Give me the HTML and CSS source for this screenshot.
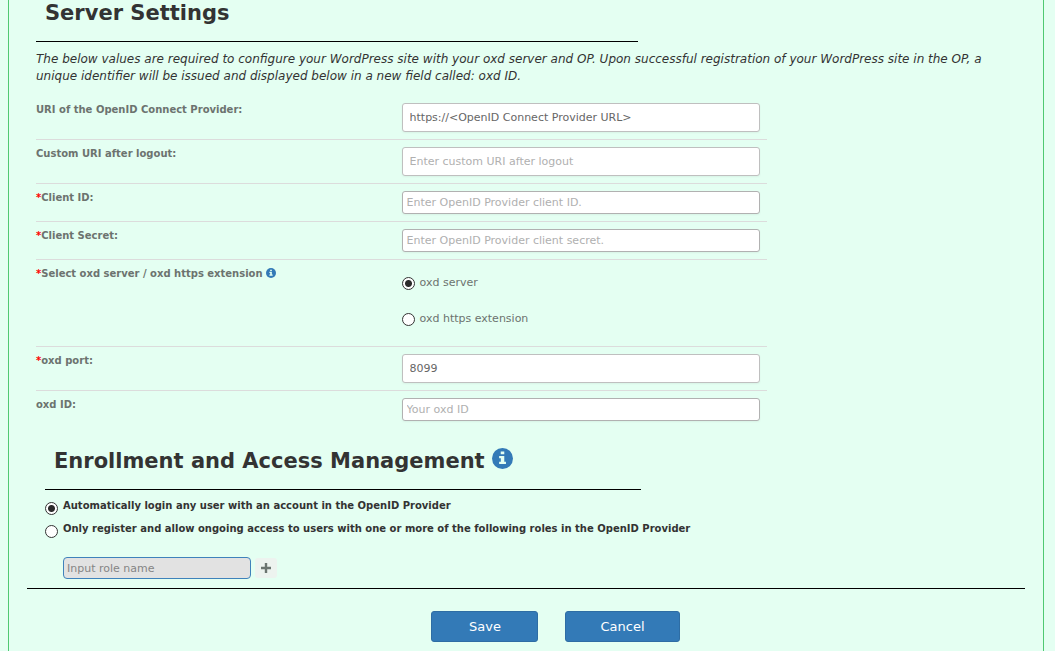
FILE: index.html
```html
<!DOCTYPE html>
<html lang="en">
<head>
<meta charset="utf-8">
<title>Server Settings</title>
<meta name="viewport" content="width=device-width, initial-scale=1">
<link rel="stylesheet" href="styles.css">
</head>
<body>
<svg class="sprite" aria-hidden="true">
  <symbol id="info" viewBox="0 0 20 20">
    <circle cx="10" cy="10" r="10" fill="#337ab7"/>
    <path fill="#e4fff2" d="M8.300 3.300h3.400v2.600H8.300zM6.800 7.500h4.900v5.500H13.300v2.300H6.800v-2.300h1.600v-3.200H6.800z"/>
  </symbol>
</svg>
<form class="panel">
  <section class="server">
    <h1 class="title">Server Settings</h1>
    <hr class="rule">
    <p class="intro">The below values are required to configure your WordPress site with your oxd server and OP. Upon successful registration of your WordPress site in the OP, a unique identifier will be issued and displayed below in a new field called: oxd ID.</p>
    <div class="fields">
      <div class="row">
        <label class="label" for="uri">URI of the OpenID Connect Provider:</label>
        <input class="field field-tall" id="uri" type="text" value="https://&lt;OpenID Connect Provider URL&gt;">
      </div>
      <div class="row">
        <label class="label" for="logout">Custom URI after logout:</label>
        <input class="field field-tall" id="logout" type="text" placeholder="Enter custom URI after logout">
      </div>
      <div class="row">
        <label class="label" for="client-id"><span class="required">*</span>Client ID:</label>
        <input class="field" id="client-id" type="text" placeholder="Enter OpenID Provider client ID.">
      </div>
      <div class="row">
        <label class="label" for="client-secret"><span class="required">*</span>Client Secret:</label>
        <input class="field" id="client-secret" type="text" placeholder="Enter OpenID Provider client secret.">
      </div>
      <div class="row" role="radiogroup" aria-labelledby="connection">
        <div class="label" id="connection"><span class="required">*</span>Select oxd server / oxd https extension <svg class="info-small" aria-hidden="true"><use href="#info"/></svg></div>
        <div class="choices">
          <label class="choice"><input class="radio" type="radio" name="connection" checked>oxd server</label>
          <label class="choice"><input class="radio" type="radio" name="connection">oxd https extension</label>
        </div>
      </div>
      <div class="row">
        <label class="label" for="port"><span class="required">*</span>oxd port:</label>
        <input class="field field-tall" id="port" type="text" value="8099">
      </div>
      <div class="row">
        <label class="label" for="oxd-id">oxd ID:</label>
        <input class="field" id="oxd-id" type="text" placeholder="Your oxd ID">
      </div>
    </div>
  </section>
  <section class="enrollment">
    <h2 class="title">Enrollment and Access Management <svg class="info-large" aria-hidden="true"><use href="#info"/></svg></h2>
    <hr class="rule">
    <div class="policies">
      <label class="policy"><input class="radio" type="radio" name="policy" checked><span>Automatically login any user with an account in the OpenID Provider</span></label>
      <label class="policy"><input class="radio" type="radio" name="policy"><span>Only register and allow ongoing access to users with one or more of the following roles in the OpenID Provider</span></label>
    </div>
    <div class="role">
      <input class="role-name" type="text" placeholder="Input role name" aria-label="Role name" disabled>
      <button class="add" type="button" aria-label="Add role"><svg class="plus" viewBox="0 0 12 12" aria-hidden="true"><path fill="#6b7570" d="M4.800 1h2.400v3.800H11v2.400H7.200V11H4.800V7.200H1V4.800h3.800z"/></svg></button>
    </div>
  </section>
  <hr class="divider">
  <div class="actions">
    <button class="button" type="submit">Save</button>
    <button class="button" type="button">Cancel</button>
  </div>
</form>
</body>
</html>
```
FILE: styles.css
```css
* {
  box-sizing: border-box;
}

body {
  margin: 0;
  background: #e4fff2;
  color: #333;
  font: 11px/16px Verdana, "DejaVu Sans", sans-serif;
}

input,
button {
  font: inherit;
}

.sprite {
  display: none;
}

.panel {
  min-height: 100vh;
  margin: 0 11px 0 8px;
  padding: 0 18px 9px;
  border: solid #4fc972;
  border-width: 0 1px;
}

.server {
  padding: 0 9px;
}

.title {
  margin: 0;
  padding-left: 9px;
  font-size: 21px;
  line-height: 26px;
}

.rule,
.divider {
  margin: 0;
  border: 0;
  border-top: 1px solid #000;
}

.rule {
  width: 62%;
  margin-top: 15px;
}

.server .rule {
  width: 61.4%;
}

.intro {
  margin: 9px 0 0;
  font-size: 12px;
  line-height: 17px;
  font-style: italic;
}

.fields {
  width: 74.6%;
  margin-top: 11px;
}

.row {
  display: grid;
  grid-template-columns: 1fr 1fr;
  align-items: start;
  padding: 7px 0;
  border-bottom: 1px solid #dcdcdc;
  color: #6c736f;
}

.row:last-child {
  border-bottom: 0;
}

.label {
  font-size: 10px;
  font-weight: bold;
  line-height: 14px;
}

.required {
  color: #f00;
}

.info-small {
  width: 10px;
  height: 10px;
  vertical-align: -1px;
}

.field {
  width: 100%;
  max-width: calc(100% - 7px);
  height: 23px;
  padding: 0 4px;
  border: 1px solid #b1b1b1;
  border-radius: 3px;
  background: #fff;
  box-shadow: 0 1px 2px #0000000d;
  color: #666;
}

.field-tall {
  height: 29px;
  padding: 0 7px;
  border-color: #bfbfbf;
}

.field::placeholder {
  color: #b0b0b0;
}

.choices {
  display: grid;
  gap: 20px;
  padding: 8px 0 12px;
}

.choice {
  display: flex;
  align-items: center;
  gap: 5px;
}

.radio {
  flex: none;
  appearance: none;
  width: 13px;
  height: 13px;
  margin: 0;
  border: 1px solid #333;
  border-radius: 50%;
  background: #fff;
}

.radio:checked {
  background: radial-gradient(circle, #2b2b2b 3px, #fff 4px);
}

.enrollment {
  padding: 20px 18px 9px;
}

.info-large {
  width: 21px;
  height: 21px;
  vertical-align: -1px;
}

.policies {
  display: grid;
  gap: 6px;
  padding-top: 8px;
  font-size: 10px;
  font-weight: bold;
}

.policy {
  display: flex;
  align-items: flex-end;
  gap: 5px;
}

.policy span {
  padding-bottom: 1px;
}

.role {
  display: flex;
  align-items: center;
  gap: 4px;
  margin: 19px 0 0 18px;
}

.role-name {
  width: 188px;
  height: 22px;
  padding: 0 3px;
  border: 1px solid #3f82bb;
  border-radius: 4px;
  background: #e2e2e2;
}

.role-name::placeholder {
  color: #858585;
}

.add {
  display: grid;
  place-items: center;
  width: 22px;
  height: 20px;
  padding: 0;
  border: 0;
  border-radius: 3px;
  background: #edf3ef;
}

.plus {
  width: 12px;
  height: 12px;
}

.actions {
  display: flex;
  justify-content: center;
  gap: 27px;
  padding: 22px 0 0 59px;
}

.button {
  min-width: 107px;
  height: 31px;
  padding: 0 34px;
  border: 1px solid #2e6da4;
  border-radius: 3px;
  background: #337ab7;
  color: #fff;
  font-size: 13px;
}
```
